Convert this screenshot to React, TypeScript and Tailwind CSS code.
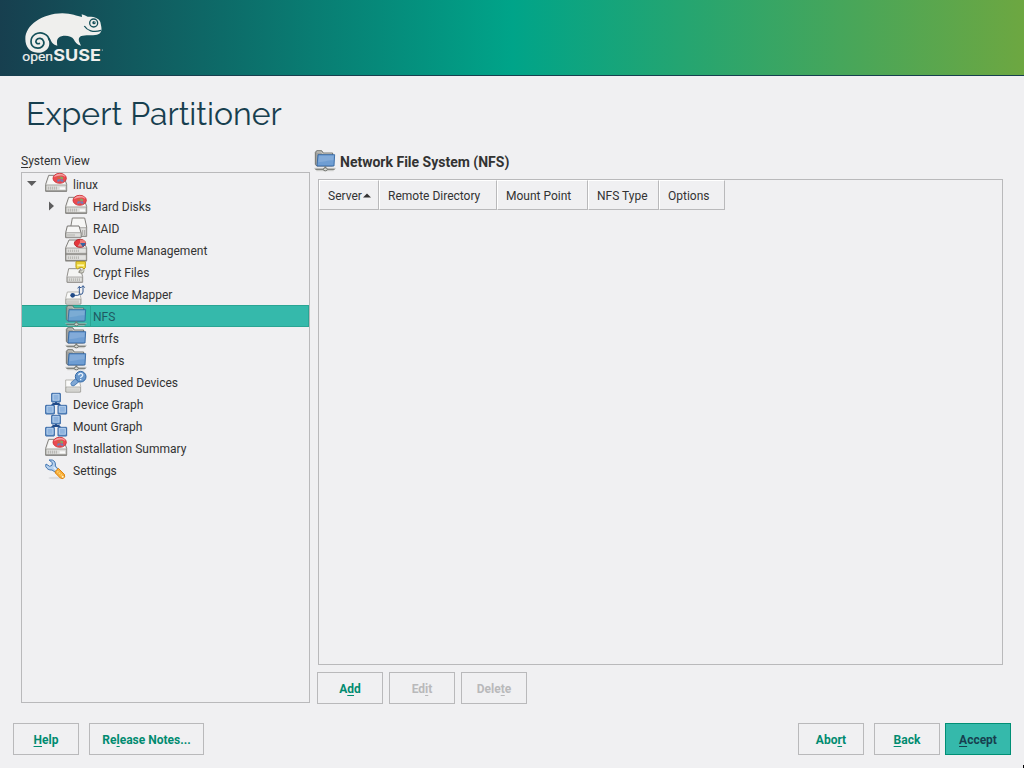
import type { ReactNode } from "react";

function Logo() {
  return (
    <svg width="95" height="65" viewBox="0 0 285 195" aria-label="openSUSE">
      <path
        fill="#efefed"
        d="M31 102C31 60 82 26 142 25C170 26 186 33 201 36L200 28Q209 31 218 35C238 34 253 40 256 51L259 66C261 78 257 87 246 89C232 92 210 89 199 93C190 97 190 105 194 113L198 122C186 119 181 113 176 103C170 91 142 89 131 98C124 104 126 113 127 122C114 119 110 113 106 103Q105 98 98 99C112 123 94 145 68 143C43 142 31 124 31 102Z"
      />
      <path
        fill="none"
        stroke="#14505a"
        strokeWidth="5"
        d="M103 106C100 87 78 78 60 88C44 98 44 122 60 128C77 133 90 122 86 109C82 99 70 97 64 105C60 112 66 119 75 115"
      />
      <circle cx="236" cy="54" r="12" fill="none" stroke="#14505a" strokeWidth="4" />
      <circle cx="237" cy="53" r="5" fill="#14505a" />
      <circle cx="239" cy="51" r="1.5" fill="#efefed" />
      <path d="M208 63C216 76 235 84 258 76" fill="none" stroke="#14505a" strokeWidth="4" />
      <text x="22" y="168" fill="#efefed" stroke="#efefed" strokeWidth="0.6" fontFamily="Roboto, sans-serif" fontSize="36" textLength="92" lengthAdjust="spacingAndGlyphs">open</text>
      <text x="115" y="168" fill="#efefed" fontFamily="Inter, sans-serif" fontWeight="700" fontSize="46" textLength="143" lengthAdjust="spacingAndGlyphs">SUSE</text>
      <circle cx="262" cy="135" r="1.5" fill="#efefed" />
    </svg>
  );
}

function Icon({ children }: { children: ReactNode }) {
  return (
    <svg className="shrink-0 overflow-visible" width="22" height="22" viewBox="0 0 66 66" strokeLinejoin="round">
      {children}
    </svg>
  );
}

function DiskIcon() {
  return (
    <Icon>
      <path d="M11 7H55L65 34V54H2V34Z" fill="#efefee" stroke="#82807c" strokeWidth="3" />
      <path d="M14 10H53L60 33H7Z" fill="#f7f7f6" />
      <path d="M3 36H64V53H3Z" fill="#dededc" stroke="#8d8b87" strokeWidth="2" />
      <path d="M1 55H66" stroke="#6d6b68" strokeWidth="2" />
      <path d="M10 41V50M16 41V50M22 41V50M28 41V50M34 41V50" stroke="#aaa8a4" strokeWidth="2.5" />
      <path d="M44 46H60" stroke="#fbfbfb" strokeWidth="6" />
      <ellipse cx="44" cy="16" rx="20" ry="15" fill="#ec4a50" stroke="#c92c32" strokeWidth="2.5" />
      <path d="M27 13C29 -1 59 -1 61 12C51 5 38 7 27 13Z" fill="#f5a0a1" />
      <path d="M37 13L44 10V17L37 19Z" fill="#c66a40" />
      <path d="M46 10L54 13V19L46 17Z" fill="#82a964" />
      <path d="M37 20L44 18V25L37 26Z" fill="#5c87c9" />
      <path d="M46 19L55 20V27L46 25Z" fill="#6f7fb8" />
    </Icon>
  );
}

function RaidIcon() {
  return (
    <Icon>
      <path d="M22 3H59L65 30V58H17V31Z" fill="#f6f6f5" stroke="#82807c" strokeWidth="3" />
      <path d="M18 32H64V57H18" fill="#dededc" stroke="#8d8b87" strokeWidth="2" />
      <path d="M53 39V54M59 39V54" stroke="#aaa8a4" strokeWidth="3" />
      <path d="M7 27H42L48 47V62H2V47Z" fill="#f6f6f5" stroke="#777572" strokeWidth="3" />
      <path d="M3 47H48V61H3Z" fill="#dededc" stroke="#8d8b87" strokeWidth="2" />
      <path d="M9 51V58M15 51V58M21 51V58M27 51V58" stroke="#aaa8a4" strokeWidth="2.5" />
    </Icon>
  );
}

function VolumeIcon() {
  return (
    <Icon>
      <path d="M12 3H52L65 26V65H2V26Z" fill="#f1f1f0" stroke="#82807c" strokeWidth="3" />
      <path d="M3 27H64V43H3ZM3 47H64V64H3Z" fill="#e2e2e0" stroke="#85837f" strokeWidth="2" />
      <path d="M10 32V39M16 32V39M22 32V39M28 32V39M34 32V39M40 32V39M10 52V60M16 52V60M22 52V60M28 52V60M34 52V60M40 52V60" stroke="#aaa8a4" strokeWidth="2.5" />
      <path d="M1 45H65M1 66H65" stroke="#6d6b68" strokeWidth="2" />
      <ellipse cx="45" cy="13" rx="17" ry="12" fill="#e5363c" stroke="#a92125" strokeWidth="2.5" />
      <path d="M45 12V2C55 1 62 6 62 13Z" fill="#ee7a79" />
      <path d="M45 12H62Q61 20 53 24Z" fill="#3465a4" />
      <path d="M45 12L53 23L38 22Z" fill="#d29794" />
    </Icon>
  );
}

function CryptIcon() {
  return (
    <Icon>
      <path d="M11 23H46L53 47V64H6V47Z" fill="#f4f4f3" stroke="#92908c" strokeWidth="3" />
      <path d="M7 48H52V63H7Z" fill="#e0e0de" stroke="#92908c" strokeWidth="2" />
      <path d="M13 52V60M19 52V60M25 52V60M31 52V60M37 52V60M43 52V60" stroke="#aaa8a4" strokeWidth="2.5" />
      <path d="M54 24V29Q53 35 46 33L41 31" fill="none" stroke="#929087" strokeWidth="8" />
      <path d="M54 24V29Q53 34 46 32" fill="none" stroke="#dedfd5" strokeWidth="4" />
      <path d="M33 2H61V20L57 24L51 19H43L38 24L33 20Z" fill="#f6de48" stroke="#b69c14" strokeWidth="3" />
      <path d="M36 4H58V9H36Z" fill="#e9cf32" />
      <path d="M37 13H57" stroke="#fff7a9" strokeWidth="5" />
    </Icon>
  );
}

function MapperIcon() {
  return (
    <Icon>
      <path d="M7 27H43L48 46V63H2V46Z" fill="#f9f9f8" stroke="#aaa8a4" strokeWidth="2.5" />
      <path d="M3 48H47V63H3Z" fill="#e2e2e0" stroke="#96948f" strokeWidth="2" />
      <path d="M9 52V60M15 52V60M21 52V60M27 52V60M33 52V60M39 52V60" stroke="#aaa8a4" strokeWidth="2.5" />
      <circle cx="23" cy="37" r="7" fill="#204a87" />
      <path d="M24 37H38Q43 37 43 32V12M43 34Q54 36 54 27V10M38 16L43 10L48 15M49 14L54 8L59 14" fill="none" stroke="#204a87" strokeWidth="2.7" />
    </Icon>
  );
}

function FolderIcon() {
  return (
    <Icon>
      <path d="M4 7L8 2H23L28 9H56V48H8L4 43Z" fill="#a1a29f" stroke="#646661" strokeWidth="2.5" />
      <path d="M9 6H22L26 12H54" fill="none" stroke="#d2d2ce" strokeWidth="2.5" />
      <path d="M12 14H62L60 48H9Z" fill="#6f9ed3" stroke="#2d629f" strokeWidth="2.5" />
      <path d="M15 17H59L58 31C39 31 30 36 13 37Z" fill="#83abd9" />
      <path d="M1 55H65M7 62H59" stroke="#bbbcb8" strokeWidth="2.5" />
      <path d="M4 58H62" stroke="#6b6e68" strokeWidth="3" />
      <path d="M34 49V55" stroke="#777a74" strokeWidth="5" />
      <ellipse cx="34" cy="58" rx="6" ry="4.5" fill="#d9dad4" stroke="#62645f" strokeWidth="2.5" />
    </Icon>
  );
}

function UnusedIcon() {
  return (
    <Icon>
      <path d="M7 27H43L47 46V63H2V27Z" fill="#fafaf9" stroke="#aaa8a4" strokeWidth="2.5" />
      <path d="M3 48H46V63H3Z" fill="#e4e4e2" stroke="#96948f" strokeWidth="2" />
      <path d="M9 52V60M15 52V60M21 52V60M27 52V60M33 52V60M39 52V60" stroke="#b4b2ae" strokeWidth="2" />
      <path d="M38 27L24 38" stroke="#4678b1" strokeWidth="15" strokeLinecap="round" />
      <path d="M38 27L24 38" stroke="#80a8d5" strokeWidth="11" strokeLinecap="round" />
      <circle cx="47" cy="17" r="16" fill="#6797cc" stroke="#356aa6" strokeWidth="3" />
      <path d="M41 13C41 5 54 6 53 13C52 18 47 17 47 21M47 24V28" fill="none" stroke="#e4f0fc" strokeWidth="4" />
    </Icon>
  );
}

function GraphIcon() {
  return (
    <Icon>
      <path d="M33 26V34M18 41L25 33H41L48 41" fill="none" stroke="#204a87" strokeWidth="6" />
      {[[20, 1], [2, 37], [39, 37]].map(([x, y]) => (
        <g key={x}>
          <rect x={x} y={y} width="26" height="26" rx="1" fill="#719ed1" stroke="#3465a4" strokeWidth="3" />
          <rect x={x + 4} y={y + 3} width="18" height="18" fill="#8fb4df" stroke="#bed5ee" strokeWidth="2.5" />
          <path d={`M${x + 2} ${y + 24}H${x + 24}`} stroke="#4b79b3" strokeWidth="2.5" />
        </g>
      ))}
    </Icon>
  );
}

function SettingsIcon() {
  return (
    <Icon>
      <ellipse cx="34" cy="57" rx="24" ry="4" fill="#dcdcde" />
      <path d="M12 3L22 3Q33 7 31 21L41 32L33 41L21 33Q7 34 2 22L3 15L14 22L21 19L22 11Z" fill="#b7d1ee" stroke="#4175b1" strokeWidth="3" />
      <path d="M26 25L35 34" stroke="#e5f1fd" strokeWidth="4" />
      <path d="M31 37L40 28L58 46Q62 55 54 59L46 57L31 42Z" fill="#f8ad38" stroke="#dc8512" strokeWidth="3" />
      <path d="M37 37L52 51" stroke="#ffd879" strokeWidth="5" strokeDasharray="4 3" />
      <circle cx="53" cy="53" r="3" fill="#fff2c8" />
    </Icon>
  );
}

type Item = { label: string; icon: () => ReactNode; depth: number; arrow?: "open" | "closed"; selected?: boolean };

const items: Item[] = [
  { label: "linux", icon: DiskIcon, depth: 0, arrow: "open" },
  { label: "Hard Disks", icon: DiskIcon, depth: 1, arrow: "closed" },
  { label: "RAID", icon: RaidIcon, depth: 1 },
  { label: "Volume Management", icon: VolumeIcon, depth: 1 },
  { label: "Crypt Files", icon: CryptIcon, depth: 1 },
  { label: "Device Mapper", icon: MapperIcon, depth: 1 },
  { label: "NFS", icon: FolderIcon, depth: 1, selected: true },
  { label: "Btrfs", icon: FolderIcon, depth: 1 },
  { label: "tmpfs", icon: FolderIcon, depth: 1 },
  { label: "Unused Devices", icon: UnusedIcon, depth: 1 },
  { label: "Device Graph", icon: GraphIcon, depth: 0 },
  { label: "Mount Graph", icon: GraphIcon, depth: 0 },
  { label: "Installation Summary", icon: DiskIcon, depth: 0 },
  { label: "Settings", icon: SettingsIcon, depth: 0 },
];

function TreeRow({ item }: { item: Item }) {
  const Glyph = item.icon;
  return (
    <div className={`flex h-[22px] items-center ${item.selected ? "bg-[#35b9ab] text-[#1f5962] shadow-[inset_0_1px_#26a08d,inset_0_-1px_#26a08d]" : ""}`}>
      <div className={`flex h-full shrink-0 items-center ${item.depth ? "w-[43px] pl-[26px]" : "w-[23px] pl-[5px]"}`}>
        {item.arrow === "open" && (
          <svg width="10" height="8" viewBox="0 0 10 8"><path d="M0 1H9.5L4.75 6Z" fill="#5d5d5e" /></svg>
        )}
        {item.arrow === "closed" && (
          <svg width="7" height="10" viewBox="0 0 7 10"><path d="M1 .5L6 5L1 9.5Z" fill="#5d5d5e" /></svg>
        )}
      </div>
      <div className={item.selected ? "opacity-90" : ""}><Glyph /></div>
      <span className={`flex h-full items-center whitespace-nowrap pt-px ${item.selected ? "ml-[3px] flex-1 border border-[#2aa594] pl-0.5" : "ml-1.5"}`}>{item.label}</span>
    </div>
  );
}

function Button({ before = "", mark, after, kind = "normal", wide }: { before?: string; mark: string; after: string; kind?: "normal" | "disabled" | "primary"; wide?: boolean }) {
  const tone = {
    normal: "border-[#b9b9bb] text-[#008b70]",
    disabled: "border-[#b9b9bb] text-[#b9b9bb]",
    primary: "border-[#008f75] bg-[#35b9ab] text-[#173f4f]",
  }[kind];
  return (
    <button className={`flex h-8 items-center justify-center border pt-px text-xs font-bold ${wide ? "w-[115px]" : "w-[66px]"} ${tone}`}>
      <span className="whitespace-pre">{before}<span className="underline decoration-1 underline-offset-2 [text-decoration-skip-ink:none]">{mark}</span>{after}</span>
    </button>
  );
}

function HeaderCell({ children, width }: { children: ReactNode; width: string }) {
  return (
    <div className={`flex h-[30px] items-center border-b border-l border-r border-t border-b-[#b9b9bb] border-l-white border-r-[#b9b9bb] border-t-white pl-2 pt-px ${width}`}>
      {children}
    </div>
  );
}

export default function App() {
  return (
    <div className="flex h-[768px] w-[1024px] flex-col overflow-hidden bg-[#f0f0f2] font-[Roboto,sans-serif] text-xs text-[#333333]">
      <header className="h-[76px] shrink-0 border-b border-[#173f4f] bg-[linear-gradient(90deg,#173f4f_0%,#00a489_50%,#6da741_100%)] pl-[15px] pt-[5px]">
        <Logo />
      </header>
      <h1 className="ml-[26px] mt-4 h-11 whitespace-nowrap font-[Raleway,Lato,sans-serif] text-[32px] font-normal leading-[44px] text-[#173f4f]">Expert Partitioner</h1>
      <main className="flex h-[568px] shrink-0 pl-[21px] pt-[13px]">
        <section className="w-[289px]">
          <div className="h-[23px] pt-1 leading-4"><span className="underline underline-offset-2 [text-decoration-skip-ink:none]">S</span>ystem View</div>
          <div className="h-[531px] border border-[#b9b9bb]">
            {items.map((item) => <TreeRow key={item.label} item={item} />)}
          </div>
        </section>
        <section className="ml-1 w-[689px]">
          <div className="flex h-[30px] items-center gap-1 pb-[6px]">
            <FolderIcon />
            <h2 className="pb-px pt-0.5 text-sm font-bold">Network File System (NFS)</h2>
          </div>
          <div className="ml-1 h-[486px] w-[685px] border border-[#b9b9bb]">
            <div className="flex">
              <HeaderCell width="w-[60px]">
                Server
                <svg width="8" height="5" viewBox="0 0 8 5" className="ml-px"><path d="M0 4.5L4 .5L8 4.5Z" fill="#333333" /></svg>
              </HeaderCell>
              <HeaderCell width="w-[118px]">Remote Directory</HeaderCell>
              <HeaderCell width="w-[91px]">Mount Point</HeaderCell>
              <HeaderCell width="w-[71px]">NFS Type</HeaderCell>
              <HeaderCell width="w-[66px]">Options</HeaderCell>
            </div>
          </div>
          <div className="ml-[3px] mt-[7px] flex gap-1.5">
            <Button before="A" mark="d" after="d" />
            <Button before="Ed" mark="i" after="t" kind="disabled" />
            <Button before="Dele" mark="t" after="e" kind="disabled" />
          </div>
        </section>
      </main>
      <footer className="mt-[19px] flex pl-[13px] pr-[13px]">
        <Button mark="H" after="elp" />
        <div className="ml-2.5"><Button before="Re" mark="l" after="ease Notes..." wide /></div>
        <div className="ml-auto"><Button before="Abo" mark="r" after="t" /></div>
        <div className="ml-2.5"><Button mark="B" after="ack" /></div>
        <div className="ml-[5px]"><Button mark="A" after="ccept" kind="primary" /></div>
      </footer>
      <div className="mt-[10px] h-[3px] w-px self-end bg-black" />
    </div>
  );
}
